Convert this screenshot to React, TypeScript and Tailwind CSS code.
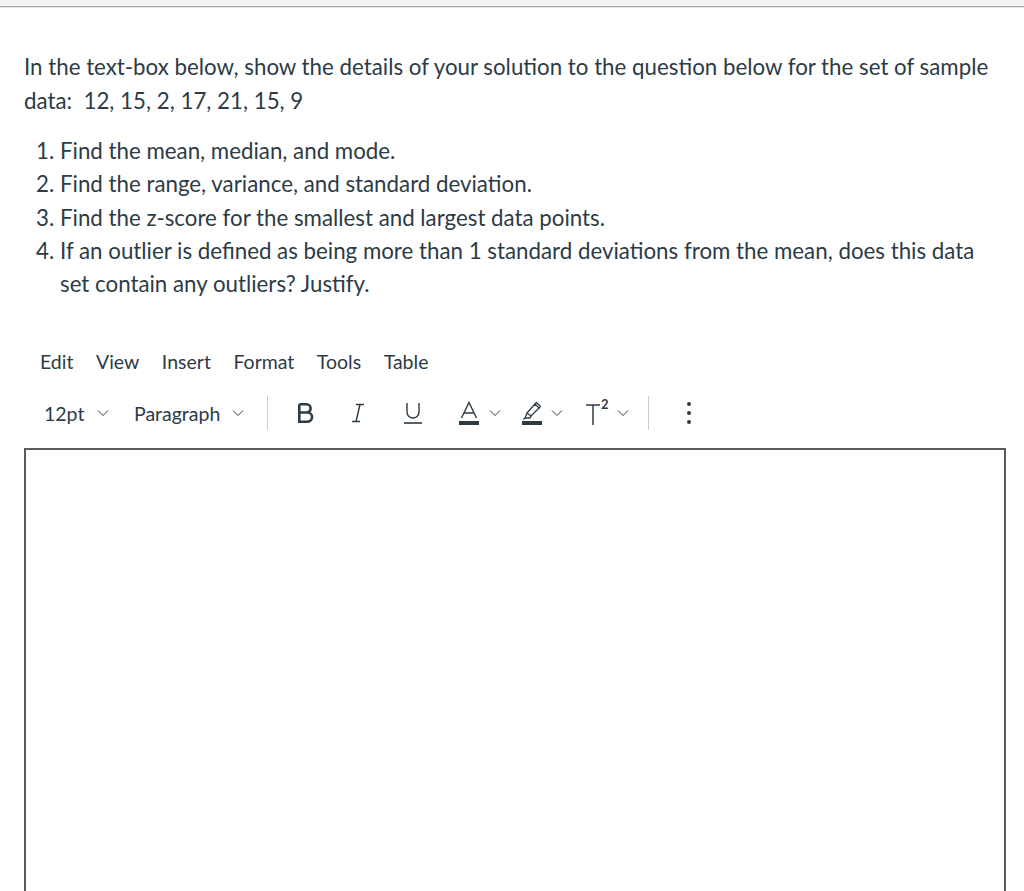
import React from "react";

const Chev = () => (
  <svg width="12" height="8" viewBox="0 0 12 8" fill="none" stroke="#2d3b45" strokeWidth="1">
    <path d="M1 1.5 L6 6.5 L11 1.5" />
  </svg>
);

export default function App() {
  return (
    <div className="w-[1024px] h-[891px] bg-white overflow-hidden text-[#2d3b45]" style={{ fontFamily: "Lato, 'Noto Sans', sans-serif" }}>
      <div className="h-[7px] bg-[#f4f4f4] border-b border-[#a8a8a8]" />
      <div className="h-px bg-[#e8e8e8]" />
      <div className="pl-[24px] pr-[20px] pt-[42px]">
        <p className="text-[22.3px] leading-[34px] m-0">
          In the text-box below, show the details of your solution to the question below for the set of sample data:&nbsp; 12, 15, 2, 17, 21, 15, 9
        </p>
        <ol className="list-decimal pl-[36px] mt-[16px] text-[22.3px] leading-[33.3px]">
          <li>Find the mean, median, and mode.</li>
          <li>Find the range, variance, and standard deviation.</li>
          <li>Find the z-score for the smallest and largest data points.</li>
          <li>If an outlier is defined as being more than 1 standard deviations from the mean, does this data set contain any outliers? Justify.</li>
        </ol>
        <div className="mt-[43px] flex items-center h-[36px] text-[19.5px] pl-[16px] gap-[22.5px]">
          <span>Edit</span>
          <span>View</span>
          <span>Insert</span>
          <span>Format</span>
          <span>Tools</span>
          <span>Table</span>
        </div>
        <div className="mt-[16px] flex items-center h-[36px] text-[19.5px]">
          <div className="flex items-center pl-[20px] gap-[13px] w-[110px]">
            <span>12pt</span>
            <Chev />
          </div>
          <div className="flex items-center gap-[12px] w-[133px]">
            <span>Paragraph</span>
            <Chev />
          </div>
          <div className="w-px h-[34px] bg-[#c7cdd1]" />
          <div className="flex items-center">
            <span className="ml-[29px]">
              <svg width="18" height="20" viewBox="0 0 18 20" fill="none" stroke="#2d3b45" strokeWidth="2.6">
                <path d="M2.3 1.3 V18.7 H10.5 A4.6 4.6 0 0 0 10.5 9.5 H2.3 M2.3 9.5 H9.5 A4.1 4.1 0 0 0 9.5 1.3 H2.3" />
              </svg>
            </span>
            <span className="ml-[36px]">
              <svg width="14" height="20" viewBox="0 0 14 20" fill="none" stroke="#2d3b45" strokeWidth="1.4">
                <path d="M5 1.5 H13 M1 18.5 H9 M9 1.5 L5 18.5" />
              </svg>
            </span>
            <span className="ml-[38px]">
              <svg width="20" height="22" viewBox="0 0 20 22" fill="none" stroke="#2d3b45" strokeWidth="1.4">
                <path d="M4 1 V10 A6 6 0 0 0 16 10 V1" />
                <path d="M1 21 H19" strokeWidth="1.6" />
              </svg>
            </span>
            <span className="ml-[35px] flex items-center gap-[9px]">
              <svg width="22" height="24" viewBox="0 0 22 24">
                <path d="M3.5 17 L11 1.5 L18.5 17 M6 12 H16" fill="none" stroke="#2d3b45" strokeWidth="1.4" />
                <rect x="1" y="20" width="20" height="4" fill="#2d3b45" />
              </svg>
              <Chev />
            </span>
            <span className="ml-[20px] flex items-center gap-[8px]">
              <svg width="22" height="24" viewBox="0 0 22 24">
                <g fill="none" stroke="#2d3b45" strokeWidth="1.3" strokeLinejoin="round">
                  <path d="M6 12 L14 3 L18 7 L10 15 Z" />
                  <path d="M6 12 L4 17 L9 17 L10 15" />
                  <path d="M4 17 L2.5 18.5" />
                  <path d="M13.5 3.5 L15.5 1.5 L19.5 5.5 L17.5 7.5" />
                </g>
                <rect x="1" y="20" width="20" height="4" fill="#2d3b45" />
              </svg>
              <Chev />
            </span>
            <span className="ml-[22px] flex items-center gap-[8px]">
              <span className="relative inline-block w-[24px] h-[24px]">
                <svg width="24" height="24" viewBox="0 0 24 24">
                  <path d="M1 4 H15 M8 4 V24" fill="none" stroke="#2d3b45" strokeWidth="1.5" />
                </svg>
                <span className="absolute left-[16px] top-[-6px] text-[13px] font-bold">2</span>
              </span>
              <Chev />
            </span>
            <div className="ml-[19px] w-px h-[34px] bg-[#c7cdd1]" />
            <span className="ml-[38px] flex flex-col gap-[5px]">
              <span className="w-[4px] h-[4px] rounded-full bg-[#2d3b45]" />
              <span className="w-[4px] h-[4px] rounded-full bg-[#2d3b45]" />
              <span className="w-[4px] h-[4px] rounded-full bg-[#2d3b45]" />
            </span>
          </div>
        </div>
      </div>
      <div className="ml-[24px] mt-[17px] w-[982px] h-[460px] border-2 border-[#5b5b5e] bg-white" />
    </div>
  );
}
